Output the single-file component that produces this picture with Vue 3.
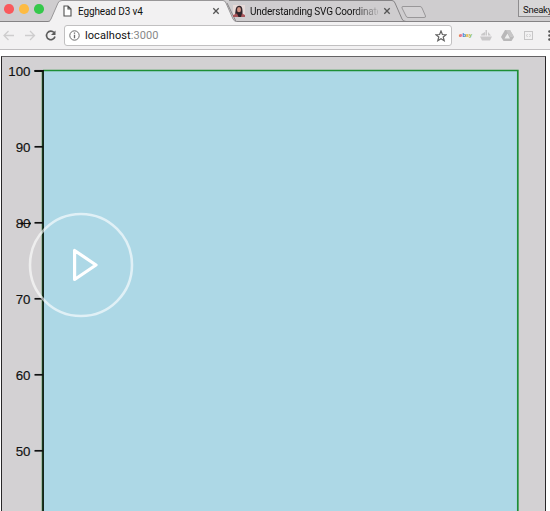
<script setup>
const ticks = [100, 90, 80, 70, 60, 50].map((value, i) => ({ value, y: 14.5 + i * 76 }))
</script>

<template>
  <div class="browser">
    <header class="tabs">
      <svg class="shapes" width="550" height="22" viewBox="0 0 550 22">
        <path d="M229 0.5H392Q394 .5 395 3L402 19Q403 21.5 406 21.5M236 21.5L227 3" fill="none" stroke="#858385" />
        <path d="M0 21.5H550" stroke="#858385" />
        <path d="M49 22Q50 21 51 19L58 3Q59 .5 62 .5H223Q225 .5 226 3L233 19Q234 21.5 237 22Z" fill="#f2f1f2" />
        <path d="M48 21.5Q50 21.5 51 19L58 3Q59 .5 62 .5H223Q225 .5 226 3L233 19Q234 21.5 237 21.5" fill="none" stroke="#989698" />
        <path d="M403 6.5H420Q421.500 6.500 422 8L425.500 16Q426 17.500 424 17.500H408Q406.500 17.500 406 16L402 8Q401.500 6.500 403 6.500Z" fill="#d4d2d4" stroke="#999799" />
      </svg>
      <div class="lights"><i class="red"></i><i class="yellow"></i><i class="green"></i></div>
      <div class="tab first">
        <svg width="9" height="12" viewBox="0 0 9 12"><path d="M1 1H5L8 4V11H1ZM5 1V4H8" fill="#fff" stroke="#505050" stroke-width="1.1" /></svg>
        <span>Egghead D3 v4</span>
        <svg class="close" width="8" height="8" viewBox="0 0 8 8"><path d="M1.300 1.300L6.700 6.700M6.700 1.300L1.300 6.700" /></svg>
      </div>
      <div class="tab second">
        <svg width="12" height="12" viewBox="0 0 12 12">
          <rect width="12" height="12" fill="#e6dad8" />
          <path d="M2.500 12Q1.500 2 5 1Q9.500 0 9.500 6V12Z" fill="#30242a" />
          <ellipse cx="6" cy="4.700" rx="2" ry="2.600" fill="#d39484" />
          <path d="M0 12V10L4 8.500L5.500 12ZM12 12V10L9 8.500L8 12Z" fill="#a85358" />
        </svg>
        <span class="fade">Understanding SVG Coordinate</span>
        <svg class="close" width="8" height="8" viewBox="0 0 8 8"><path d="M1.300 1.300L6.700 6.700M6.700 1.300L1.300 6.700" /></svg>
      </div>
      <div class="profile">Sneaky</div>
    </header>

    <nav class="toolbar">
      <svg class="nav" width="64" height="28" viewBox="0 0 64 28" fill="none">
        <path d="M14 13.500H4M8.500 9L4 13.500L8.500 18M25 13.500H34.500M30 9L34.500 13.500L30 18" stroke="#cecdce" stroke-width="1.300" />
        <path d="M54 10.500A4.300 4.300 0 1 0 55 14.500" stroke="#5c5c5c" stroke-width="1.600" />
        <path d="M55.500 8.500V13H51Z" fill="#5c5c5c" />
      </svg>
      <div class="address">
        <svg width="11" height="11" viewBox="0 0 11 11"><circle cx="5.500" cy="5.500" r="4.700" fill="none" stroke="#6a6a6a" /><path d="M5.500 4.700V8.300M5.500 2.500V3.700" stroke="#6a6a6a" stroke-width="1.300" /></svg>
        <span>localhost<em>:3000</em></span>
        <svg class="star" width="12" height="12" viewBox="0 0 12 12"><path d="M6 1L7.400 4.500L11 4.700L8.200 7L9.200 10.700L6 8.700L2.800 10.700L3.800 7L1 4.700L4.600 4.500Z" fill="none" stroke="#626262" stroke-width="1.200" /></svg>
      </div>
      <div class="ebay"><b>e</b><b>b</b><b>a</b><b>y</b></div>
      <svg class="extensions" width="78" height="28" viewBox="472 22 78 28">
        <g fill="#c9c8c9"><path d="M480 36.500H492L490 40.500H482ZM485.500 30H487V35.500H485.500ZM481.500 34L485 32V35.500H481ZM488 32L491 35.500H488Z" /></g>
        <path d="M505 30H510L514 37L511.500 41H503.500L501 37Z" fill="#b9b8b9" />
        <path d="M507.500 33.500L504.500 38.500H510Z" fill="#eeeeee" />
        <path d="M510 30L514 37H510L506 30Z" fill="#c7c6c7" />
        <rect x="524.500" y="31.500" width="8" height="8" fill="none" stroke="#c7c6c7" />
        <path d="M527.500 34L526.500 35.500L527.500 37M529.500 34L530.500 35.500L529.500 37" fill="none" stroke="#c7c6c7" stroke-width=".9" />
        <g fill="#555"><circle cx="549.500" cy="31.500" r="1.300" /><circle cx="549.500" cy="35.500" r="1.300" /><circle cx="549.500" cy="39.500" r="1.300" /></g>
      </svg>
    </nav>

    <main class="page">
      <div class="chart">
        <svg width="543" height="455" viewBox="0 0 543 455">
          <rect x="41" y="13.500" width="475" height="470" fill="#add8e6" />
          <path d="M41 13.500H515.800V455" fill="none" stroke="#1d8e36" stroke-width="1.700" />
          <path d="M32.500 14H41V455" fill="none" stroke="#071308" stroke-width="1.800" />
          <path d="M40 15V455" stroke="#197927" stroke-width=".5" />
          <g v-for="tick in ticks" :key="tick.value">
            <path :d="`M32.500 ${tick.y - .7}H41`" stroke="#111" stroke-width="1.700" />
            <text x="28.500" :y="tick.y + 4" text-anchor="end">{{ tick.value }}</text>
          </g>
          <path d="M19 166.500H29M21 165L19 166.500L21 168M27 165L29 166.500L27 168" fill="none" stroke="#111" />
        </svg>
      </div>
    </main>

    <svg class="play" width="106" height="106" viewBox="0 0 106 106">
      <circle cx="53" cy="53" r="51" fill="none" stroke="#fff" stroke-opacity=".62" stroke-width="2.600" />
      <path d="M46.600 38.500V67.500L68 53Z" fill="none" stroke="#fff" stroke-width="3.200" stroke-linejoin="round" />
    </svg>
  </div>
</template>

<style>
body { margin: 0; overflow: hidden; }
</style>

<style scoped>
.browser { position: relative; width: 550px; height: 511px; overflow: hidden; background: #fff; font-family: Roboto, "Liberation Sans", sans-serif; }
svg { display: block; flex: none; }
.tabs { position: relative; display: flex; box-sizing: border-box; height: 22px; background: #cfcdcf; }
.shapes { position: absolute; left: 0; top: 0; }
.lights, .tab, .profile { position: relative; }
.lights { display: flex; flex: none; box-sizing: border-box; gap: 5.500px; width: 63px; padding: 4px 0 0 4px; }
.lights i { width: 9.500px; height: 9.500px; border-radius: 50%; }
.red { background: #f9595c; }
.yellow { background: #fdbb43; }
.green { background: #35c84b; }
.tab { display: flex; flex: none; align-items: center; height: 22px; box-sizing: border-box; font-size: 10px; color: #111; white-space: nowrap; }
.first { width: 157px; gap: 6px; }
.second { width: 158px; margin-left: 13px; gap: 5px; }
.tab span { letter-spacing: -.12px; }
.tab .fade { width: 128px; letter-spacing: -.22px; -webkit-mask-image: linear-gradient(90deg, #000 80%, transparent 103%); mask-image: linear-gradient(90deg, #000 80%, transparent 103%); }
.close { margin-left: auto; fill: none; stroke: #555; stroke-width: 1.300; }
.profile { box-sizing: border-box; width: 40px; height: 18px; margin: -1px -8px 0 auto; padding-left: 4px; border: 1px solid #8e8c8e; background: #d8d7d8; font-size: 9.500px; line-height: 19px; letter-spacing: -.25px; color: #111; }
.toolbar { display: flex; box-sizing: border-box; height: 28px; border-bottom: 1px solid #c0bec0; background: #f2f1f2; }
.address { display: flex; align-items: center; box-sizing: border-box; width: 388px; height: 21px; margin-top: 3px; padding: 0 4px; border: 1px solid #c1c0c1; border-radius: 3px; background: #fff; font-size: 11px; color: #111; }
.address span { margin-left: 5px; letter-spacing: .08px; }
.address em { font-style: normal; color: #888; }
.star { margin-left: auto; }
.ebay { width: 20px; padding-left: 7px; box-sizing: border-box; white-space: nowrap; font: bold 6px/26px "Liberation Sans", sans-serif; letter-spacing: -.2px; }
.ebay b:nth-child(1) { color: #e04550; }
.ebay b:nth-child(2) { color: #3274ce; }
.ebay b:nth-child(3) { color: #e7b640; }
.ebay b:nth-child(4) { color: #91bd48; }
.page { padding: 6px 0 0 1px; }
.chart { width: 543px; height: 455px; border: 1px solid #292729; border-top-color: #656365; border-bottom: 0; background: #d3d1d3; }
.chart text { font: 13.300px "Liberation Sans", sans-serif; fill: #111; stroke: #111; stroke-width: .15px; }
.play { position: absolute; left: 28px; top: 212px; }
</style>
